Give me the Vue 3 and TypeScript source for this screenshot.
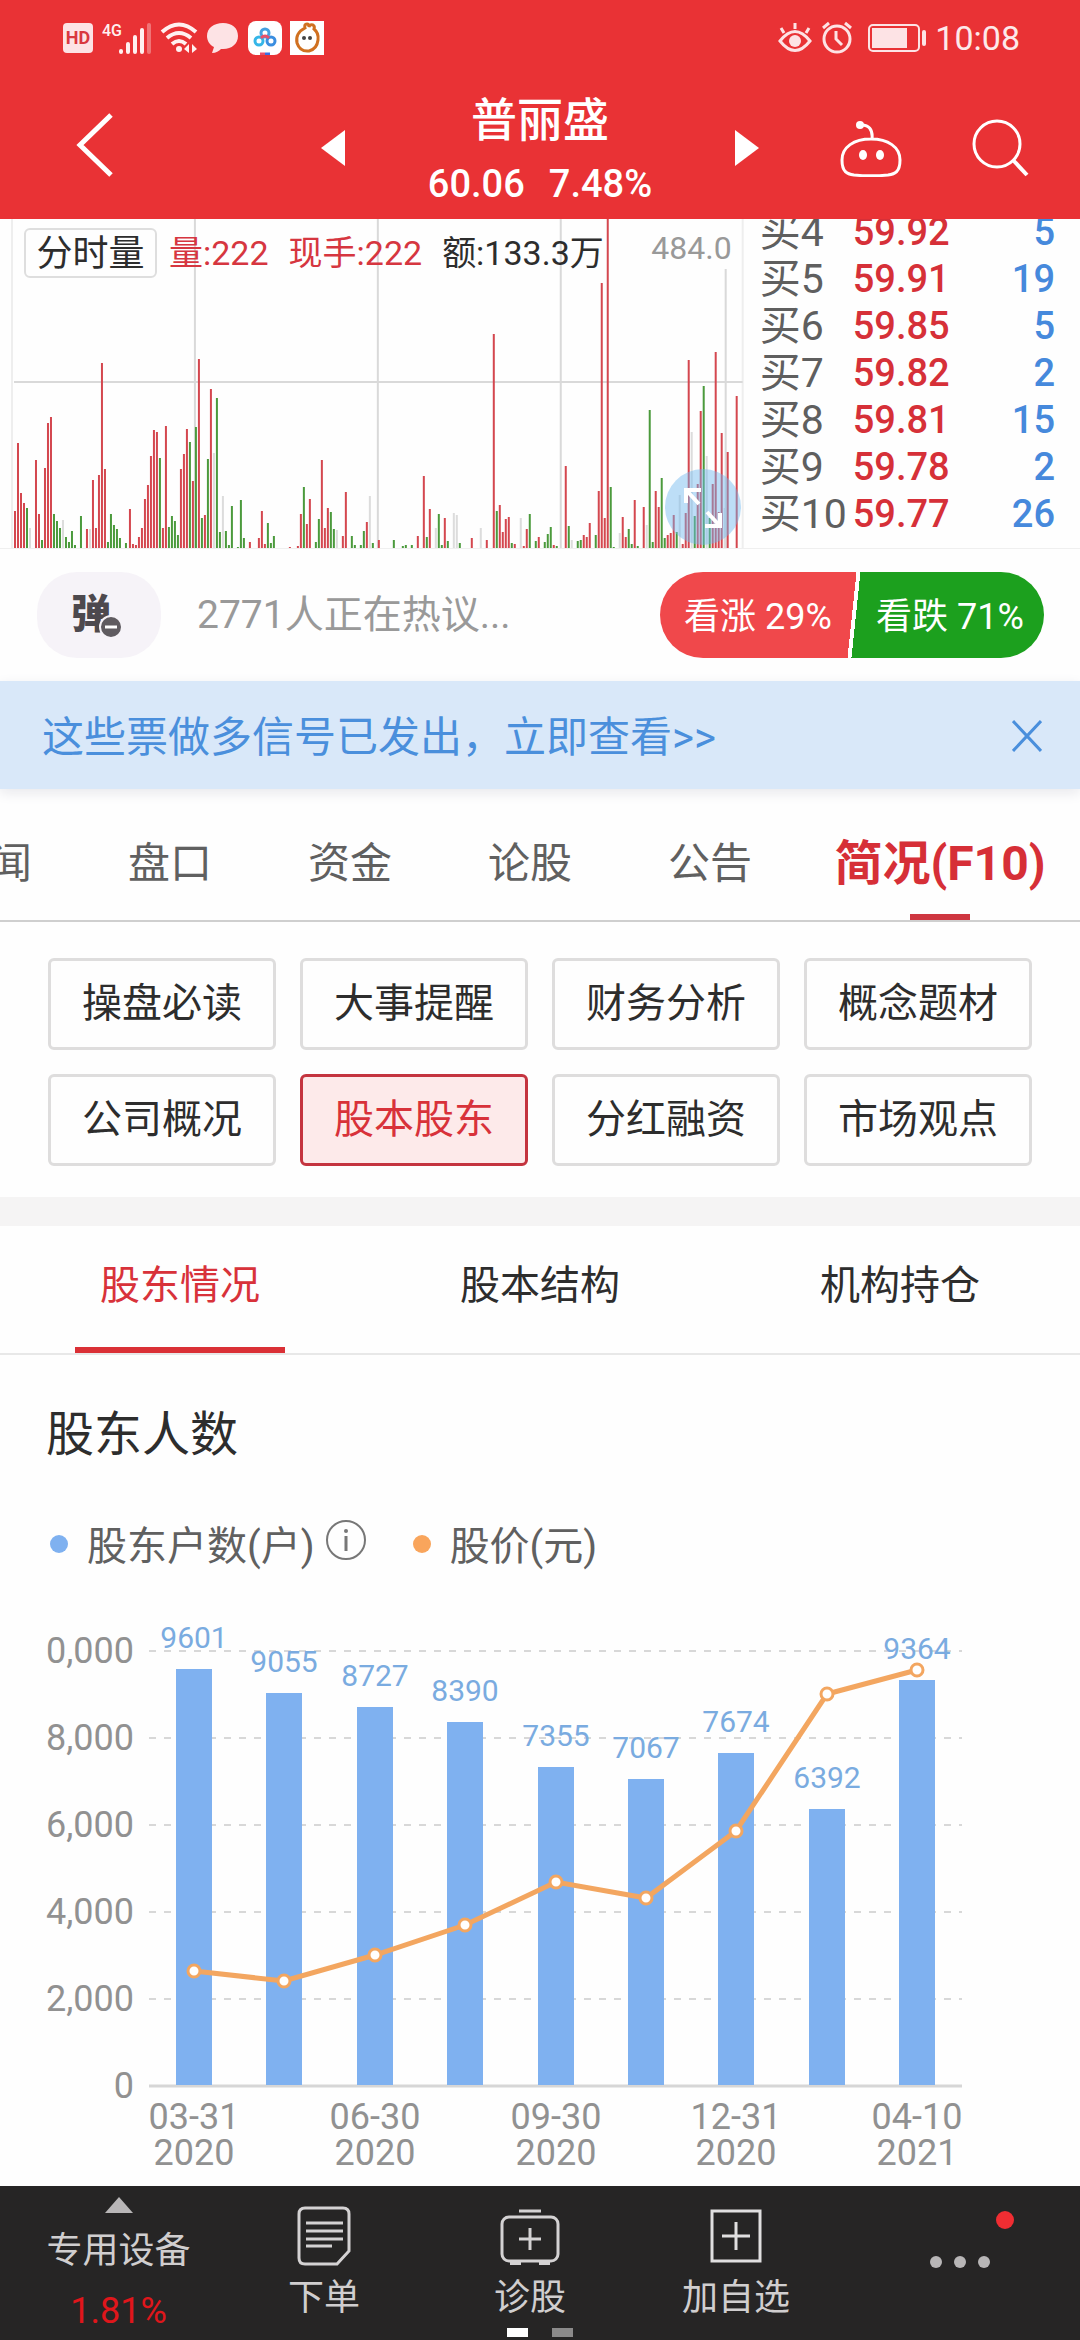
<script setup lang="ts">
type Tone = 'r' | 'g' | 'n'

// Volume series: tone, x position and bar height inside the 748 x 329 plot
const volumeSource = `
r15,37 r18,105 r21,55 r24,45 g27,40 n30,20 r36,88 r39,34 g42,8 r45,80 r48,125 r51,131 g54,34 g57,27 g60,20 n63,28
g66,11 g69,6 g72,17 g75,3 g81,32 r87,19 n90,19 r93,68 r96,20 r99,73 r102,185 r105,79 g108,6 g111,34 g114,23 g117,19
g120,10 g126,5 r130,39 r133,4 r136,3 r139,11 r142,20 r145,49 r148,63 r151,92 r154,118 r157,116 g160,90 r163,20
r166,122 g169,21 g172,32 g175,27 g178,13 r181,79 r184,94 r187,119 g190,106 r193,67 g196,121 r199,189 g202,30 r205,33
g208,89 r211,159 n214,95 g217,150 g220,16 n223,52 g226,17 g229,3 g232,42 g238,1 g241,48 g244,10 r250,6 r259,10
r262,37 r265,4 g268,25 g271,5 g274,12 r290,1 r298,2 r301,34 g304,61 r307,24 r310,49 g316,6 g319,29 r322,88 r325,20
r328,40 g331,36 g334,19 n337,18 r343,12 r346,56 g352,12 g355,3 g361,3 g364,17 r367,26 n370,52 g373,5 r379,8 g394,8
g403,2 g406,3 g412,3 r418,12 r424,72 g427,11 r430,39 n436,20 g439,34 g442,3 r445,30 g448,7 n454,35 n457,33 g460,5
r472,10 n481,20 r487,8 r494,214 g497,37 r500,43 r503,16 r506,29 r509,31 g512,5 r515,4 n521,30 r524,2 r527,19 g530,34
g536,7 r539,11 g545,6 g548,14 g551,21 r554,3 g557,2 r566,82 g569,22 n572,8 g578,7 g581,8 r584,13 r587,11 r590,25
g596,13 r599,57 r602,265 r605,30 r608,329 g611,61 g614,1 n620,15 r623,31 r626,11 g629,19 g632,4 r635,48 g638,2
r644,41 n647,23 g650,138 g653,6 r656,57 r659,41 g662,70 g665,10 r668,13 r671,15 r674,33 g677,16 n680,53 r683,4
r686,35 r689,188 n692,116 g695,32 r698,64 r701,137 g704,162 n707,92 g710,30 r713,64 r716,196 r719,36 r722,115
n725,40 r728,96 r737,152`

const volumes = volumeSource.trim().split(/\s+/).map((item) => {
  const [x, height] = item.slice(1).split(',').map(Number)
  return { tone: item[0] as Tone, x, height }
})

const bids = [
  { level: '买4', price: '59.92', size: 5 },
  { level: '买5', price: '59.91', size: 19 },
  { level: '买6', price: '59.85', size: 5 },
  { level: '买7', price: '59.82', size: 2 },
  { level: '买8', price: '59.81', size: 15 },
  { level: '买9', price: '59.78', size: 2 },
  { level: '买10', price: '59.77', size: 26 },
]

const tabs = ['新闻', '盘口', '资金', '论股', '公告', '简况(F10)']
const sections = ['操盘必读', '大事提醒', '财务分析', '概念题材', '公司概况', '股本股东', '分红融资', '市场观点']
const subTabs = ['股东情况', '股本结构', '机构持仓']

// Shareholder chart geometry
const baseY = 476
const centre = (index: number): number => 194 + Math.round(index * 90.4)
const barTop = (value: number): number => baseY - Math.round(value * 0.0434)

const holders = [9601, 9055, 8727, 8390, 7355, 7067, 7674, 6392, 9364].map((value, i) => ({
  value,
  x: centre(i),
  y: barTop(value),
}))
const prices = [361, 371, 345, 315, 272, 288, 221, 84, 60].map((y, i) => ({ x: centre(i), y }))
const priceLine = prices.map((p) => `${p.x},${p.y}`).join(' ')
const ticks = ['0', '2,000', '4,000', '6,000', '8,000', '0,000'].map((label, i) => ({
  label,
  y: baseY - i * 87,
}))
const dates = [
  ['03-31', '2020'],
  ['06-30', '2020'],
  ['09-30', '2020'],
  ['12-31', '2020'],
  ['04-10', '2021'],
].map(([day, year], i) => ({ day, year, x: centre(i * 2) }))
</script>

<template>
  <div class="page">
    <header class="top">
      <div class="status">
        <div class="status-side">
          <svg width="32" height="34" viewBox="0 0 32 34">
            <rect x="1" y="2" width="30" height="30" rx="4" fill="#fde3e5" />
            <text x="16" y="23" text-anchor="middle" class="hd">HD</text>
          </svg>
          <svg width="50" height="34" viewBox="0 0 50 34">
            <text x="0" y="15" class="net">4G</text>
            <g stroke="#fff0f0" stroke-width="4" stroke-linecap="round">
              <path d="M19 30v1M26 23v8M33 16v15M40 9v22" />
              <path d="M47 4v27" opacity=".35" />
            </g>
          </svg>
          <svg width="38" height="34" viewBox="0 0 38 34" fill="none" stroke="#fff0f0" stroke-width="4">
            <path d="M2 11Q19-4 36 11M7 17q12-10 24 0M12 23q7-6 14 0" />
            <circle cx="19" cy="28" r="3" fill="#fff0f0" stroke="none" />
            <path d="M29 23v9l-5-4zM32 23v9l5-4z" fill="#fff0f0" stroke="none" />
          </svg>
          <svg width="34" height="34" viewBox="0 0 34 34">
            <path d="M17 2C8 2 1 7 1 15c0 5 3 9 7 11l-2 6c4 0 7-2 9-4 10 1 17-5 17-13S26 2 17 2z" fill="#fde3e5" />
          </svg>
          <svg width="34" height="34" viewBox="0 0 34 34" fill="none" stroke-width="3">
            <rect width="34" height="34" rx="8" fill="#fff" />
            <circle cx="11" cy="20" r="4" stroke="#35b6e8" />
            <circle cx="23" cy="20" r="4" stroke="#3a8ee0" />
            <circle cx="17" cy="12" r="4" stroke="#45a0e0" />
            <path d="M13 17q4-4 8 0" stroke="#e8506a" />
            <path d="M12 33h5" stroke="#e8506a" /><path d="M17 33h5" stroke="#3a6ee0" />
          </svg>
          <svg width="34" height="34" viewBox="0 0 34 34">
            <rect width="34" height="34" fill="#fff" />
            <path
              d="M15 7q-1-4 2-4 2 0 2 3 1-3 4-2 2 1 1 4 5 4 4 11-1 9-9 11-9 1-12-8Q5 12 15 7z"
              fill="none" stroke="#d07020" stroke-width="3"
            />
            <circle cx="14" cy="17" r="2" fill="#444" /><circle cx="20" cy="17" r="2" fill="#444" />
          </svg>
        </div>
        <div class="status-side">
          <svg width="34" height="34" viewBox="0 0 34 34" fill="none" stroke="#fde3e5" stroke-width="3">
            <path d="M2 20q15-19 30 0-15 19-30 0zM17 8V2M6 12L3 7M28 12l3-5" />
            <circle cx="17" cy="20" r="6" fill="#fde3e5" stroke="none" />
          </svg>
          <svg width="34" height="34" viewBox="0 0 34 34" fill="none" stroke="#fde3e5" stroke-width="3">
            <circle cx="17" cy="18" r="13" />
            <path d="M16 10v8l6 6M3 7l6-5M31 7l-6-5" />
          </svg>
          <svg width="58" height="34" viewBox="0 0 58 34" class="battery">
            <rect x="1" y="4" width="50" height="26" rx="4" fill="none" stroke="#fde3e5" stroke-width="2" />
            <rect x="4" y="7" width="35" height="20" fill="#fde3e5" />
            <rect x="54" y="9" width="4" height="16" rx="2" fill="#fde3e5" />
          </svg>
          <span class="clock">10:08</span>
        </div>
      </div>

      <div class="titlebar">
        <div class="title-left">
          <button class="icon-btn" aria-label="返回">
            <svg width="38" height="66" viewBox="0 0 38 66" fill="none" stroke="#fff" stroke-width="5">
              <path d="M35 3L4 33l31 30" />
            </svg>
          </button>
        </div>
        <div class="title-main">
          <button class="icon-btn" aria-label="上一只">
            <svg width="24" height="38" viewBox="0 0 24 38"><path d="M24 1v36L0 19z" fill="#fff" /></svg>
          </button>
          <div class="stock">
            <h1>普丽盛</h1>
            <p><span>60.06</span><span>7.48%</span></p>
          </div>
          <button class="icon-btn" aria-label="下一只">
            <svg width="24" height="38" viewBox="0 0 24 38"><path d="M0 1v36l24-18z" fill="#fff" /></svg>
          </button>
        </div>
        <div class="title-right">
          <button class="icon-btn" aria-label="智能助手">
            <svg width="62" height="58" viewBox="0 0 62 58" fill="none" stroke="#fff" stroke-width="3">
              <path d="M31 20C14 20 2 28 2 41c0 12 5 14 12 15 10 1 24 1 34 0 7-1 12-3 12-15 0-13-12-21-29-21zM20 6c9-1 13 5 12 14" />
              <circle cx="20" cy="6" r="4" fill="#fff" stroke="none" />
              <ellipse cx="23" cy="36" rx="4" ry="5" fill="#fff" stroke="none" />
              <ellipse cx="40" cy="36" rx="4" ry="5" fill="#fff" stroke="none" />
            </svg>
          </button>
          <button class="icon-btn" aria-label="搜索">
            <svg width="58" height="58" viewBox="0 0 58 58" fill="none" stroke="#fff" stroke-width="3">
              <circle cx="25" cy="25" r="23" /><path d="M41 41l14 15" stroke-width="4" />
            </svg>
          </button>
        </div>
      </div>
    </header>

    <section class="market">
      <div class="volume">
        <svg class="volume-plot" viewBox="0 0 748 329" preserveAspectRatio="none">
          <path d="M12 0v329M743 0v329" stroke="#eeeeee" stroke-width="2" />
          <path d="M195 0v329M378 0v329M561 0v329M726 50v279M14 163h729" stroke="#d9d9d9" stroke-width="2" />
          <rect
            v-for="bar in volumes" :key="bar.x" :class="`tone-${bar.tone}`"
            :x="bar.x - 1" :y="329 - bar.height" width="2" :height="bar.height"
          />
        </svg>
        <div class="volume-info">
          <button class="chip">分时量</button>
          <span class="up">量:222</span>
          <span class="up">现手:222</span>
          <span>额:133.3万</span>
          <span class="peak">484.0</span>
        </div>
        <button class="expand" aria-label="全屏">
          <svg width="76" height="76" viewBox="0 0 76 76" fill="none" stroke="#fff" stroke-width="4">
            <path d="M21 34V21h15M22 22l12 13M55 44v13H40M54 56L42 43" />
          </svg>
        </button>
      </div>
      <table class="bids">
        <tbody>
          <tr v-for="bid in bids" :key="bid.level">
            <th scope="row">{{ bid.level }}</th>
            <td class="price">{{ bid.price }}</td>
            <td class="size">{{ bid.size }}</td>
          </tr>
        </tbody>
      </table>
    </section>

    <section class="talk">
      <button class="barrage" aria-label="弹幕">
        <span>弹</span>
        <svg width="24" height="24" viewBox="0 0 24 24">
          <circle cx="12" cy="12" r="11" fill="#5f5b60" stroke="#f6f3f8" stroke-width="2" />
          <path d="M6 12h12" stroke="#fff" stroke-width="3" />
        </svg>
      </button>
      <p>2771人正在热议...</p>
      <div class="vote">
        <button>看涨 29%</button>
        <button>看跌 71%</button>
      </div>
    </section>

    <aside class="notice">
      <a href="#signals">这些票做多信号已发出，立即查看&gt;&gt;</a>
      <button class="icon-btn" aria-label="关闭">
        <svg width="30" height="32" viewBox="0 0 30 32" stroke="#4a8fdc" stroke-width="3">
          <path d="M1 1l28 30M29 1L1 31" />
        </svg>
      </button>
    </aside>

    <nav class="tabs">
      <button v-for="(tab, i) in tabs" :key="tab" :class="{ active: i === 5 }">{{ tab }}</button>
    </nav>

    <section class="sections">
      <button v-for="item in sections" :key="item" :class="{ active: item === '股本股东' }">{{ item }}</button>
    </section>

    <nav class="subtabs">
      <button v-for="(tab, i) in subTabs" :key="tab" :class="{ active: i === 0 }">{{ tab }}</button>
    </nav>

    <section class="holders">
      <h2>股东人数</h2>
      <div class="legend">
        <i class="dot blue"></i>
        <span>股东户数(户)</span>
        <button class="icon-btn info" aria-label="说明">
          <svg width="42" height="42" viewBox="0 0 42 42" fill="none" stroke="#777" stroke-width="2">
            <circle cx="21" cy="21" r="19" />
            <path d="M21 17v15" stroke-width="3" />
            <circle cx="21" cy="12" r="2" fill="#777" stroke="none" />
          </svg>
        </button>
        <i class="dot orange"></i>
        <span>股价(元)</span>
      </div>
      <svg class="chart" viewBox="0 0 1080 576">
        <g v-for="tick in ticks" :key="tick.label">
          <path v-if="tick.label !== '0'" :d="`M149 ${tick.y}H962`" class="grid" />
          <text x="134" :y="tick.y + 12" text-anchor="end" class="axis">{{ tick.label }}</text>
        </g>
        <path :d="`M149 ${baseY}H962`" class="base" />
        <g v-for="item in holders" :key="item.value">
          <rect :x="item.x - 18" :y="item.y" width="36" :height="baseY - item.y - 1" fill="#7fb1f0" />
          <text :x="item.x" :y="item.y - 21" text-anchor="middle" class="value">{{ item.value }}</text>
        </g>
        <polyline :points="priceLine" fill="none" stroke="#f3a660" stroke-width="5" />
        <circle
          v-for="p in prices" :key="p.x" :cx="p.x" :cy="p.y" r="6"
          fill="#fff" stroke="#f3a660" stroke-width="3"
        />
        <text v-for="date in dates" :key="date.day" text-anchor="middle" class="axis">
          <tspan :x="date.x" y="519">{{ date.day }}</tspan>
          <tspan :x="date.x" y="555">{{ date.year }}</tspan>
        </text>
      </svg>
    </section>

    <footer class="toolbar">
      <button class="industry">
        <svg width="28" height="16" viewBox="0 0 28 16"><path d="M14 0l14 16H0z" fill="#b8b6b7" /></svg>
        <span>专用设备</span>
        <strong>1.81%</strong>
      </button>
      <button class="tool">
        <svg width="60" height="60" viewBox="0 0 60 60" fill="none" stroke="#d4d2d3" stroke-width="3">
          <path d="M11 2h38q6 0 6 6v37L43 58H11q-6 0-6-6V8q0-6 6-6zM12 17h37M12 25h37M12 33h37M12 40h26" />
        </svg>
        <span>下单</span>
      </button>
      <button class="tool">
        <svg width="60" height="60" viewBox="0 0 60 60" fill="none" stroke="#d4d2d3" stroke-width="3">
          <rect x="2" y="11" width="56" height="44" rx="7" />
          <path d="M19 5h22M30 22v22M19 33h22" />
          <path d="M10 57h11M39 57h11" stroke-width="4" />
        </svg>
        <span>诊股</span>
      </button>
      <button class="tool">
        <svg width="60" height="60" viewBox="0 0 60 60" fill="none" stroke="#e0dfe0" stroke-width="3">
          <rect x="6" y="5" width="48" height="50" /><path d="M30 16v28M16 30h28" />
        </svg>
        <span>加自选</span>
      </button>
      <button class="more" aria-label="更多">
        <svg width="110" height="80" viewBox="0 0 110 80" fill="#b8b6b7">
          <circle cx="31" cy="56" r="6" /><circle cx="55" cy="56" r="6" /><circle cx="79" cy="56" r="6" />
          <circle cx="100" cy="14" r="9" fill="#f02d32" />
        </svg>
      </button>
      <div class="pager"><i class="on"></i><i></i></div>
    </footer>
  </div>
</template>

<style>
body {
  margin: 0;
  background: #fefefe;
}
</style>

<style scoped>
.page {
  display: flex;
  flex-direction: column;
  min-height: 100vh;
  overflow: hidden;
  background: #fefefe;
  color: #2d2d2d;
  font-family: Roboto, "Noto Sans CJK SC", sans-serif;
}
.page * {
  box-sizing: border-box;
}
button {
  margin: 0;
  padding: 0;
  border: 0;
  background: none;
  color: inherit;
  font: inherit;
  white-space: nowrap;
}
h1,
h2,
p {
  margin: 0;
  font-weight: 400;
}
svg {
  display: block;
  flex: none;
}
.icon-btn {
  display: flex;
}

.top {
  background: #e93235;
  color: #fff;
}
.status {
  display: flex;
  justify-content: space-between;
  align-items: center;
  height: 76px;
  padding: 0 60px 0 62px;
}
.status-side {
  display: flex;
  align-items: center;
  gap: 8px;
}
.hd {
  fill: #d9383f;
  font-size: 18px;
  font-weight: 700;
}
.net {
  fill: #fff0f0;
  font-size: 16px;
  font-weight: 500;
}
.battery {
  margin: 0 1px 0 6px;
}
.clock {
  color: #fde9ea;
  font-size: 34px;
  line-height: 40px;
}
.titlebar {
  display: grid;
  grid-template-columns: 1fr 438px 1fr;
  height: 143px;
}
.title-left,
.title-main,
.title-right {
  display: flex;
  align-items: center;
}
.title-left {
  padding: 0 0 6px 76px;
}
.title-main {
  justify-content: space-between;
}
.title-right {
  justify-content: flex-end;
  gap: 70px;
  padding: 0 50px 0 0;
}
.stock {
  padding-top: 8px;
  text-align: center;
}
.stock h1 {
  font-size: 46px;
  font-weight: 500;
  line-height: 64px;
}
.stock p {
  display: flex;
  gap: 24px;
  font-size: 38px;
  font-weight: 500;
  line-height: 64px;
}

.market {
  display: grid;
  grid-template-columns: minmax(0, 9fr) minmax(0, 4fr);
  grid-template-rows: 329px;
  overflow: hidden;
  border-bottom: 1px solid #efefef;
}
.volume {
  position: relative;
}
.volume-plot {
  width: 100%;
  height: 329px;
}
.tone-r {
  fill: #d4474f;
}
.tone-g {
  fill: #4b9a3c;
}
.tone-n {
  fill: #dcdcdc;
}
.volume-info {
  position: absolute;
  inset: 9px 16px auto 24px;
  display: flex;
  align-items: center;
  font-size: 34px;
  line-height: 50px;
  white-space: nowrap;
}
.volume-info span {
  margin-right: 20px;
}
.chip {
  width: 133px;
  height: 50px;
  margin-right: 12px;
  border: 2px solid #dedede;
  border-radius: 6px;
  background: #fefefe;
  font-size: 36px;
  line-height: 48px;
}
.up {
  color: #d63640;
}
.volume-info .peak {
  margin: 0 0 10px auto;
  color: #999;
  font-size: 32px;
  line-height: 40px;
}
.expand {
  position: absolute;
  right: 7px;
  bottom: 3px;
  border-radius: 50%;
  background: rgba(110, 185, 240, 0.45);
}
.bids {
  align-self: end;
  width: 100%;
  padding: 0 25px 10px 12px;
  border-spacing: 0;
  table-layout: fixed;
  line-height: 47px;
}
.bids th,
.bids td {
  padding: 0;
  white-space: nowrap;
}
.bids th {
  width: 93px;
  color: #5f5f5f;
  font-size: 41px;
  font-weight: 400;
  text-align: left;
}
.bids td {
  font-size: 38px;
  font-weight: 500;
}
.bids .price {
  color: #d63038;
}
.bids .size {
  color: #4689dc;
  text-align: right;
}

.talk {
  display: flex;
  align-items: center;
  height: 132px;
  padding: 0 36px 0 37px;
}
.barrage {
  display: flex;
  justify-content: center;
  align-items: center;
  width: 124px;
  height: 86px;
  padding-right: 4px;
  border-radius: 40px;
  background: #f6f3f8;
  color: #4d494e;
  font-size: 40px;
  font-weight: 900;
  line-height: 40px;
}
.barrage svg {
  margin: 24px 0 0 -12px;
}
.talk p {
  margin-left: 36px;
  color: #999;
  font-size: 39px;
  line-height: 48px;
}
.vote {
  display: flex;
  width: 384px;
  height: 86px;
  margin-left: auto;
  overflow: hidden;
  border-radius: 43px;
  background: linear-gradient(96deg, #f0484b 0 50%, #fff 50% 51%, #1ca01e 51%);
  color: #fff;
  font-size: 36px;
}
.vote button {
  flex: 1;
  padding: 0 0 4px 4px;
}

.notice {
  display: flex;
  justify-content: space-between;
  align-items: center;
  height: 108px;
  padding: 2px 38px 0 42px;
  background: #d9e8f9;
  box-shadow: 0 4px 12px #e8e8ec;
}
.notice a {
  color: #4a8fdc;
  font-size: 42px;
  line-height: 56px;
  padding-top: 4px;
  text-decoration: none;
}

.tabs {
  display: flex;
  justify-content: flex-end;
  height: 133px;
  padding-top: 10px;
  border-bottom: 2px solid #cfcfcf;
}
.tabs button {
  position: relative;
  flex: none;
  width: 180px;
  color: #606060;
  font-size: 42px;
}
.tabs .active {
  width: 280px;
  padding-bottom: 2px;
  color: #d62f37;
  font-size: 48px;
  font-weight: 700;
}
.tabs .active::after {
  content: "";
  position: absolute;
  bottom: 0;
  left: calc(50% - 30px);
  width: 60px;
  height: 6px;
  background: #ce3640;
}

.sections {
  display: grid;
  grid-template-columns: repeat(4, 1fr);
  gap: 24px;
  padding: 36px 48px 31px;
}
.sections button {
  height: 92px;
  padding-bottom: 8px;
  border: 3px solid #dedddd;
  border-radius: 6px;
  font-size: 40px;
}
.sections .active {
  border-color: #c4343f;
  background: #fdeaea;
  color: #d8323a;
}

.subtabs {
  display: grid;
  grid-template-columns: repeat(3, 1fr);
  justify-items: center;
  height: 158px;
  border-top: 29px solid #f5f4f4;
  border-bottom: 2px solid #e8e8e8;
}
.subtabs button {
  width: 210px;
  padding-bottom: 10px;
  border-bottom: 6px solid transparent;
  font-size: 40px;
}
.subtabs .active {
  border-bottom-color: #da3036;
  color: #d8323a;
}

.holders h2 {
  padding: 48px 46px 0;
  font-size: 48px;
  line-height: 64px;
}
.legend {
  display: flex;
  align-items: center;
  height: 60px;
  margin: 47px 50px 0;
  color: #606060;
  font-size: 40px;
}
.dot {
  width: 18px;
  height: 18px;
  border-radius: 50%;
}
.legend span {
  padding-bottom: 2px;
  margin-left: 19px;
}
.dot.blue {
  background: #7fb1f0;
}
.dot.orange {
  background: #f9a55c;
}
.info {
  margin: 0 46px 8px 10px;
}
.chart {
  width: 100%;
  height: auto;
  margin-top: 36px;
}
.grid {
  stroke: #d8d8d8;
  stroke-width: 2;
  stroke-dasharray: 7 8;
}
.base {
  stroke: #d6d6d6;
  stroke-width: 3;
}
.axis {
  fill: #919191;
  font-size: 36px;
}
.value {
  fill: #7aabe0;
  font-size: 30px;
}

.toolbar {
  position: relative;
  display: grid;
  grid-template-columns: 221fr 206fr 206fr 206fr 241fr;
  height: 154px;
  margin-top: auto;
  background: #262525;
  color: #d0cecf;
  font-size: 36px;
  line-height: 48px;
}
.toolbar button {
  display: flex;
  flex-direction: column;
  align-items: center;
}
.industry {
  padding: 11px 0 0 16px;
}
.industry span {
  margin-top: 14px;
}
.industry strong {
  margin-top: 12px;
  color: #e0161b;
  font-weight: 400;
}
.tool {
  padding-top: 20px;
}
.tool span {
  margin-top: 8px;
}
.more {
  padding-top: 20px;
}
.pager {
  position: absolute;
  bottom: 3px;
  left: 50%;
  display: flex;
  gap: 24px;
  transform: translateX(-50%);
}
.pager i {
  width: 21px;
  height: 9px;
  background: #8b8a8a;
}
.pager .on {
  background: #fff;
}
</style>
